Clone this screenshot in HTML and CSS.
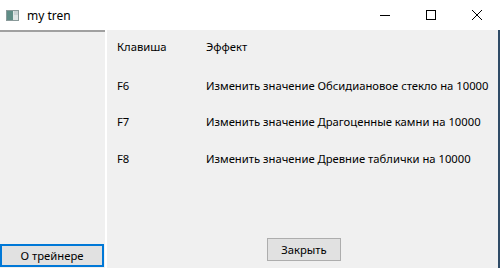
FILE: index.html
```html
<!DOCTYPE html>
<html>
<head>
<meta charset="utf-8">
<link rel="stylesheet" href="styles.css">
</head>
<body>
<div class="window">
  <div class="titlebar">
    <div class="app-icon">
      <svg width="13" height="11" viewBox="0 0 13 11"><rect x="0.5" y="0.5" width="12" height="10" fill="#dfe6e6" stroke="#8a9a9a"/><rect x="1" y="1" width="6" height="9" fill="#5f8d86"/><rect x="8" y="1" width="4" height="4" fill="#c9d3d4"/></svg>
    </div>
    <div class="title">my tren</div>
    <div class="controls">
      <div class="ctl"><svg width="10" height="10" viewBox="0 0 10 10"><path d="M0 5.5H10" stroke="#000" stroke-width="1"/></svg></div>
      <div class="ctl"><svg width="10" height="10" viewBox="0 0 10 10"><rect x="0.5" y="0.5" width="9" height="9" fill="none" stroke="#000" stroke-width="1"/></svg></div>
      <div class="ctl"><svg width="10" height="10" viewBox="0 0 10 10"><path d="M0 0L10 10M10 0L0 10" stroke="#000" stroke-width="1"/></svg></div>
    </div>
  </div>
  <div class="content">
    <div class="sidebar">
      <div class="sidebar-space"></div>
      <button class="btn btn-focus">О трейнере</button>
    </div>
    <div class="divider"></div>
    <div class="main">
      <div class="table">
        <div class="cell key">Клавиша</div><div class="cell">Эффект</div>
        <div class="cell key">F6</div><div class="cell">Изменить значение Обсидиановое стекло на 10000</div>
        <div class="cell key">F7</div><div class="cell">Изменить значение Драгоценные камни на 10000</div>
        <div class="cell key">F8</div><div class="cell">Изменить значение Древние таблички на 10000</div>
      </div>
      <div class="footer"><button class="btn btn-close">Закрыть</button></div>
    </div>
    <div class="edge"></div>
  </div>
</div>
</body>
</html>
```
FILE: styles.css
```css
html, body { margin: 0; padding: 0; }
body { width: 500px; height: 268px; overflow: hidden; font-family: "Noto Sans", "Open Sans", sans-serif; font-size: 11.25px; color: #000; background: #f0f0f0; }
.window { width: 500px; height: 268px; display: flex; flex-direction: column; }
.titlebar { height: 30px; background: #fff; display: flex; align-items: center; flex-shrink: 0; }
.app-icon { width: 13px; height: 11px; margin-left: 6px; margin-right: 8px; display: flex; }
.title { flex: 1; font-size: 12px; }
.controls { display: flex; height: 30px; }
.ctl { width: 46px; height: 30px; display: flex; align-items: center; justify-content: center; }
.content { flex: 1; display: flex; background: #f0f0f0; }
.sidebar { width: 105px; flex-shrink: 0; border-top: 2px solid #a0a0a0; display: flex; flex-direction: column; }
.sidebar-space { flex: 1; }
.divider { width: 2px; flex-shrink: 0; background: #fff; }
.main { flex: 1; min-width: 0; display: flex; flex-direction: column; padding-left: 10px; }
.table { display: grid; grid-template-columns: 89px 1fr; grid-template-rows: 39px 36px 37px 16px; padding-top: 9px; }
.cell { line-height: 16px; white-space: nowrap; }
.footer { flex: 1; display: flex; align-items: flex-end; justify-content: center; padding-bottom: 7px; padding-right: 7px; }
.edge { width: 2px; flex-shrink: 0; background: #2f4b66; }
.btn { font-family: inherit; font-size: 11.25px; background: #e1e1e1; color: #000; margin: 0; padding: 0; display: flex; align-items: center; justify-content: center; }
.btn-focus { height: 23px; width: 104px; border: 2px solid #0078d7; margin-left: 0; margin-bottom: 1px; }
.btn-close { width: 74px; height: 23px; border: 1px solid #adadad; }
```
